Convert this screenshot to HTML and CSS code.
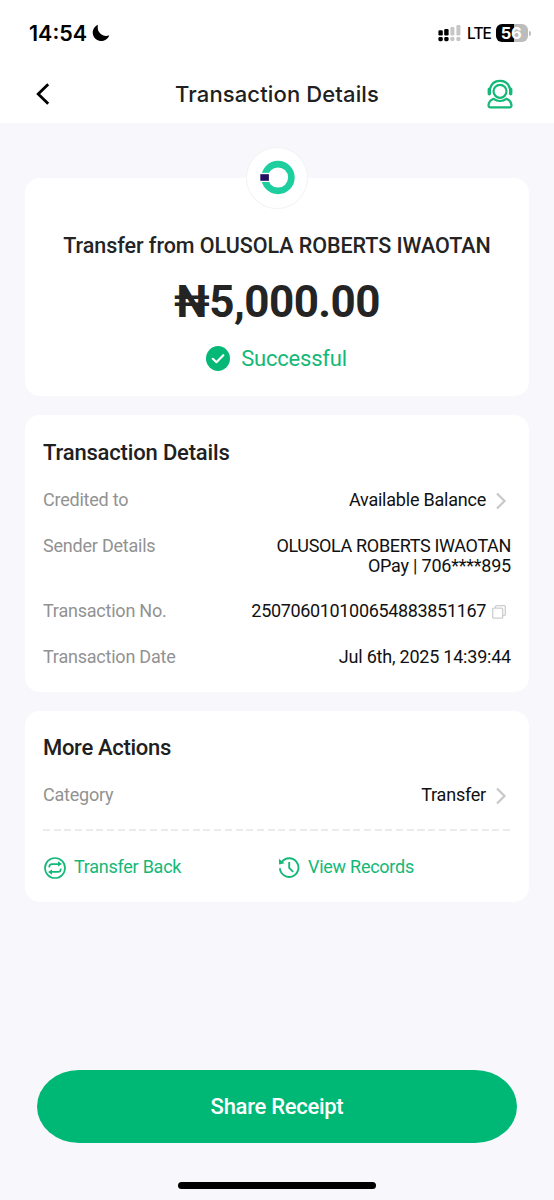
FILE: index.html
```
<!DOCTYPE html>
<html lang="en">
<head>
<meta charset="utf-8">
<title>Transaction Details</title>
<link rel="stylesheet" href="styles.css">
</head>
<body>
<div class="screen">
  <div class="status-bar">
    <div class="status-left">
      <span class="clock">14:54</span>
      <svg class="moon" width="18" height="18" viewBox="0 0 18 18"><path d="M6 0.700A8.500 8.500 0 1 0 17.300 11.200C12 13.700 4 9.500 6 0.700Z" fill="#000"/></svg>
    </div>
    <div class="status-right">
      <svg width="24" height="18" viewBox="0 0 24 18">
        <g fill="#000"><rect x="0.4" y="6.2" width="4.400" height="5.2" rx="1.2"/><rect x="6.2" y="5" width="4.400" height="6.4" rx="1.2"/><rect x="0.4" y="13" width="4.400" height="4.200" rx="1.4"/><rect x="6.2" y="13" width="4.400" height="4.200" rx="1.4"/></g>
        <g fill="#c6c6c6"><rect x="12.4" y="3" width="4" height="8.4" rx="1.2"/><rect x="18.4" y="1" width="4" height="10.4" rx="1.2"/><rect x="12.4" y="13" width="4" height="4" rx="1.3"/><rect x="18.4" y="13" width="4" height="4" rx="1.3"/></g>
      </svg>
      <span class="network">LTE</span>
      <span class="battery">56</span>
      <span class="battery-tip"></span>
    </div>
  </div>

  <header class="nav">
    <svg class="back" width="14" height="22" viewBox="0 0 14 22"><path d="M12.2 1.2L2.2 11L12.2 20.8" fill="none" stroke="#000" stroke-width="2.8"/></svg>
    <h1 class="nav-title">Transaction Details</h1>
    <svg class="support" width="26" height="30" viewBox="0 0 26 30" fill="none" stroke="#14b877" stroke-width="2.200">
      <circle cx="13" cy="12.300" r="6.500"/>
      <path d="M2.800 10.500C4 4.900 8 1.900 13 1.900S22 4.900 23.200 10.500"/>
      <path d="M2.300 10.100v4.600M23.700 10.100v4.600" stroke-width="3.400" stroke-linecap="round"/>
      <path d="M6.600 19.800C3.600 21 1.700 23.700 1.500 26.300C1.400 27.600 2.100 28.300 3.300 28.300H22.700C23.900 28.300 24.600 27.600 24.500 26.300C24.300 23.700 22.400 21 19.400 19.800C15.600 22.600 10.400 22.600 6.600 19.800Z" stroke-linejoin="round"/>
    </svg>
  </header>

  <main class="content">
    <section class="card summary">
      <div class="logo">
        <svg width="60" height="60" viewBox="0 0 60 60">
          <circle cx="31" cy="29.500" r="13.400" fill="none" stroke="#1dcf9f" stroke-width="6.600"/>
          <rect x="12" y="24.800" width="11" height="9.200" fill="#fff"/>
          <rect x="13.300" y="26.200" width="8.600" height="6.600" fill="#210f60"/>
        </svg>
      </div>
      <p class="summary-title">Transfer from OLUSOLA ROBERTS IWAOTAN</p>
      <p class="amount">₦5,000.00</p>
      <p class="result">
        <svg width="24" height="25" viewBox="0 0 24 25"><ellipse cx="12" cy="12.500" rx="12" ry="12.500" fill="#05b875"/><path d="M6.800 12.800L10.400 16.200L17.300 9.200" fill="none" stroke="#fff" stroke-width="2.200" stroke-linecap="round" stroke-linejoin="round"/></svg>
        <span class="result-text">Successful</span>
      </p>
    </section>

    <section class="card details">
      <h2 class="card-title">Transaction Details</h2>
      <div class="row">
        <span class="label">Credited to</span>
        <span class="value linked"><span class="balance">Available Balance</span><svg class="chevron" width="12" height="18" viewBox="0 0 12 18"><path d="M2 1.500L9.500 9L2 16.500" fill="none" stroke="#c8c8c8" stroke-width="2.200"/></svg></span>
      </div>
      <div class="row">
        <span class="label">Sender Details</span>
        <span class="value sender"><span class="sender-name">OLUSOLA ROBERTS IWAOTAN</span><span class="sender-account">OPay | 706****895</span></span>
      </div>
      <div class="row">
        <span class="label">Transaction No.</span>
        <span class="value linked"><span class="number">250706010100654883851167</span><svg class="copy" width="14" height="14" viewBox="0 0 14 14" fill="none" stroke="#cdcdcd" stroke-width="1.300"><rect x="0.700" y="3.200" width="10" height="10" rx="1"/><path d="M3.500 3V1.700Q3.500 0.700 4.500 0.700H12.300Q13.300 0.700 13.300 1.700V9.400Q13.300 10.400 12.300 10.400H11"/></svg></span>
      </div>
      <div class="row">
        <span class="label">Transaction Date</span>
        <span class="value date">Jul 6th, 2025 14:39:44</span>
      </div>
    </section>

    <section class="card actions">
      <h2 class="card-title">More Actions</h2>
      <div class="row">
        <span class="label">Category</span>
        <span class="value linked category">Transfer<svg class="chevron" width="12" height="18" viewBox="0 0 12 18"><path d="M2 1.500L9.500 9L2 16.500" fill="none" stroke="#c8c8c8" stroke-width="2.200"/></svg></span>
      </div>
      <div class="divider"></div>
      <div class="links">
        <a class="link">
          <svg width="24" height="22" viewBox="0 0 24 22" fill="none" stroke="#14b877" stroke-width="1.700">
            <circle cx="12" cy="11" r="10"/>
            <path d="M6.300 10.400V9.800Q6.300 7.100 9 7.100H16.500M17.700 11.600V12.200Q17.700 14.900 15 14.900H7.500"/>
            <path d="M15 4.300L19 7.100L15 9.500ZM9 12.500L5 14.900L9 17.700Z" fill="#14b877" stroke="none"/>
          </svg>
          <span>Transfer Back</span>
        </a>
        <a class="link">
          <svg width="24" height="22" viewBox="0 0 24 22" fill="none" stroke="#14b877" stroke-width="1.900">
            <path d="M4.600 5.200A9.300 9.300 0 1 1 2.900 11.300"/>
            <path d="M1.900 1.800L7.500 6.300L2.100 7.500Z" fill="#14b877" stroke="none"/>
            <path d="M12.200 5V10.900L16.200 14.900"/>
          </svg>
          <span>View Records</span>
        </a>
      </div>
    </section>
  </main>

  <footer class="footer">
    <button class="share">Share Receipt</button>
    <div class="home-indicator"></div>
  </footer>
</div>
</body>
</html>
```
FILE: styles.css
```
* { box-sizing: border-box; }
body { margin: 0; background: #f7f7fc; font-family: Roboto, sans-serif; }
h1, h2, p { margin: 0; font-weight: 500; }
svg { display: block; flex: none; }
.screen { width: 554px; height: 1200px; display: flex; flex-direction: column; white-space: nowrap; overflow: hidden; }

.status-bar { height: 66px; background: #fff; display: flex; justify-content: space-between; padding: 0 23px 0 29px; font-family: Inter, sans-serif; }
.status-left, .status-right { display: flex; align-items: center; height: 66px; }
.clock { width: 57px; font-size: 21.5px; line-height: 26px; font-weight: 600; }
.moon { margin-left: 6px; }
.network { width: 24px; margin-left: 5px; font-size: 15.5px; line-height: 20px; font-weight: 500; letter-spacing: -0.9px; margin-top: 1px; }
.battery { width: 32px; height: 18px; margin-left: 5px; border-radius: 6px; background: linear-gradient(90deg, #000 18px, #bcbcbc 18px); color: #fff; font-size: 16.5px; line-height: 18px; font-weight: 700; letter-spacing: -0.5px; text-align: center; padding-right: 2px; }
.battery-tip { width: 2px; height: 5px; margin-left: 1px; border-radius: 0 2px 2px 0; background: #bcbcbc; }

.nav { height: 57px; padding: 0 36px 2px; background: #fff; display: grid; grid-template-columns: 1fr auto 1fr; align-items: center; }
.nav-title { font-family: Inter, sans-serif; font-size: 22px; line-height: 26px; letter-spacing: 0.13px; color: #202020; }
.support { justify-self: end; margin-right: 5px; }

.content { flex: 1; padding: 55px 25px 0; display: flex; flex-direction: column; gap: 19px; }
.card { background: #fff; border-radius: 15px; padding: 0 18px; }
.summary { position: relative; height: 218px; display: flex; flex-direction: column; align-items: center; padding-top: 55px; color: #242424; }
.logo { position: absolute; left: 222px; top: -30px; width: 60px; height: 60px; border-radius: 50%; background: #fff; box-shadow: 0 0 0 1px #f3f3f6; }
.summary-title { font-size: 21.5px; line-height: 26px; font-weight: 500; letter-spacing: -0.05px; }
.amount { margin-top: 17px; font-size: 44px; line-height: 52px; font-weight: 700; letter-spacing: -0.55px; }
.result { margin-top: 18px; display: flex; align-items: center; gap: 11px; padding-right: 1px; color: #14b877; }
.result svg { margin-bottom: 1px; }
.result-text { font-size: 22px; line-height: 26px; font-weight: 400; letter-spacing: -0.2px; }

.card-title { font-size: 22px; line-height: 24px; color: #202020; margin-bottom: 25px; letter-spacing: -0.17px; }
.details { height: 277px; padding-top: 26px; }
.row { display: flex; justify-content: space-between; align-items: flex-start; font-size: 18px; line-height: 20px; letter-spacing: -0.22px; }
.details .row + .row { margin-top: 25.5px; }
.label { color: #929292; }
.value { color: #111; }
.linked { display: flex; align-items: center; }
.chevron { margin: 1px 4px 0 9px; }
.copy { margin: 1px 5px 0 6px; }
.sender { display: flex; flex-direction: column; align-items: flex-end; height: 40px; }
.sender-name, .number { letter-spacing: -0.34px; }

.actions { height: 191px; padding-top: 25px; }
.actions .card-title { letter-spacing: -0.3px; }
.divider { height: 2px; margin-top: 24px; background: repeating-linear-gradient(90deg, #ebebeb 0 7px, transparent 7px 10.7px); }
.links { display: grid; grid-template-columns: 234px 234px; margin-top: 24px; }
.link { display: flex; align-items: center; gap: 7px; font-size: 18px; line-height: 22px; letter-spacing: -0.26px; color: #14b877; }
.link svg { margin-top: 2px; }

.footer { height: 130px; display: flex; flex-direction: column; align-items: center; }
.share { width: 480px; height: 73px; border: 0; border-radius: 42px / 36.5px; background: #00b876; color: #fff; font: 500 22px/26px Roboto, sans-serif; letter-spacing: -0.28px; }
.home-indicator { width: 198px; height: 7px; margin-top: 39px; border-radius: 4px; background: #000; }
```
